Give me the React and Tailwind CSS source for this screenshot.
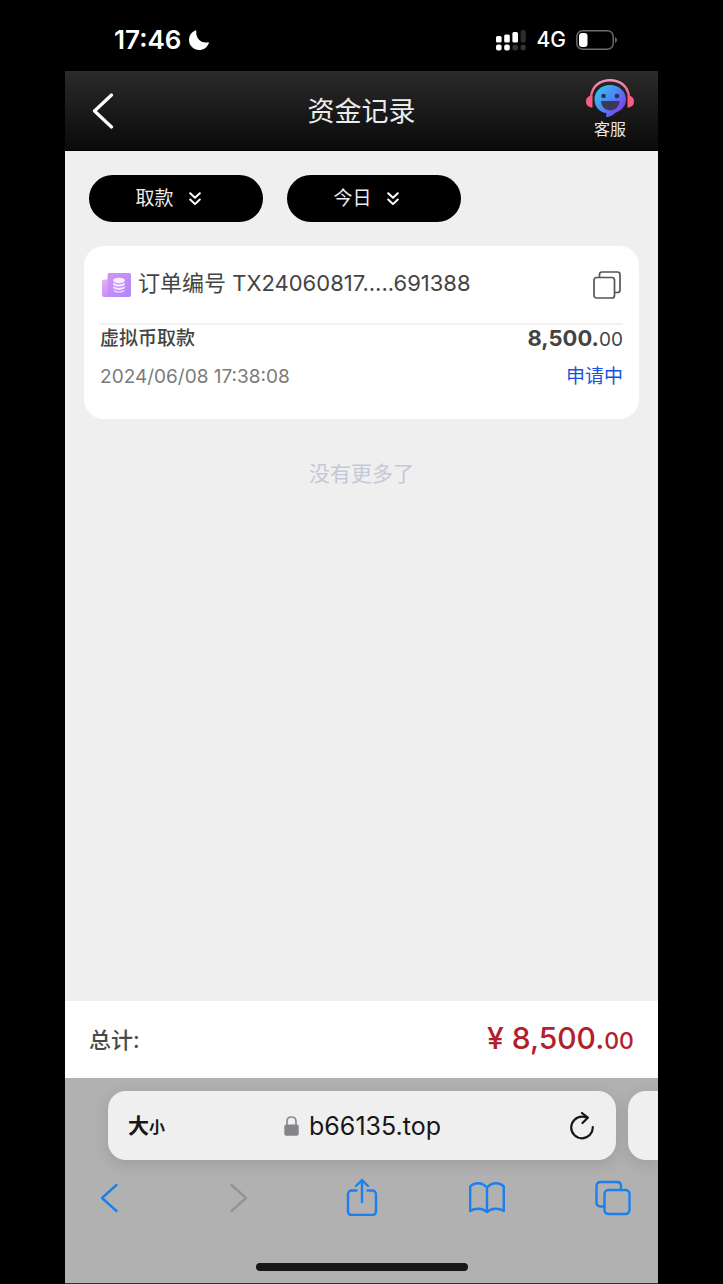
import React from "react";

function StatusBar() {
  return (
    <div className="flex h-[71px] items-center justify-between bg-black pb-[7px]">
      <div className="mt-4 flex items-center gap-2 pl-[49px] text-white">
        <time className="text-[26px] leading-7 font-semibold">17:46</time>
        <svg className="h-5 w-5" viewBox="0 0 20 20" fill="currentColor" aria-label="专注模式">
          <path d="M6.300.4Q7.400.1 7.300 1.200C6.500 7.500 11.500 13.800 19 12.300Q20.300 12 19.800 13.200C18.300 17.300 14.600 20 10.200 20 4.500 20 0 15.600 0 10 0 5.600 2.500 1.900 6.300.4Z" />
        </svg>
      </div>
      <div className="mt-4 flex items-center gap-[10px] pr-10 text-white">
        <svg className="h-[22px] w-[30px]" viewBox="0 0 30 22" fill="#fff" aria-label="信号">
          <rect x="0" y="7" width="5.600" height="6.500" rx="1.500" />
          <rect x="8.200" y="5.500" width="5.600" height="8" rx="1.500" />
          <rect x="16.400" y="3" width="5.600" height="10.500" rx="1.500" />
          <rect x="24.600" y="1" width="5.200" height="12.500" rx="1.500" fill="#2c2c2c" />
          <rect x="0" y="15.600" width="5.600" height="6" rx="2" />
          <rect x="8.200" y="15.600" width="5.600" height="6" rx="2" />
          <rect x="16.400" y="15.600" width="5.600" height="6" rx="2.500" fill="#333" />
          <rect x="24.600" y="15.600" width="5.200" height="6" rx="2.500" fill="#333" />
        </svg>
        <span className="text-[21px] leading-7 font-medium">4G</span>
        <svg className="h-5 w-[42px]" viewBox="0 0 42 20" aria-label="电量">
          <rect x=".8" y=".8" width="36.400" height="18.400" rx="5.500" fill="none" stroke="#6b6b6b" strokeWidth="1.500" />
          <rect x="3" y="3" width="8.500" height="14" rx="3" fill="#fff" />
          <path d="M39 7v6q2-.8 2-3t-2-3Z" fill="#6b6b6b" />
        </svg>
      </div>
    </div>
  );
}

function ServiceIcon() {
  return (
    <svg className="h-[38px] w-12" viewBox="0 0 48 38" aria-hidden="true">
      <defs>
        <linearGradient id="bubble" x1="0" y1="0.1" x2="1" y2="0.9">
          <stop offset="0" stopColor="#35c6ec" />
          <stop offset=".5" stopColor="#4e84f4" />
          <stop offset="1" stopColor="#9423f2" />
        </linearGradient>
        <linearGradient id="band" x1="0" y1="0" x2="0" y2="1">
          <stop offset="0" stopColor="#f194b6" />
          <stop offset="1" stopColor="#f5537f" />
        </linearGradient>
      </defs>
      <path d="M5 18C6 7 14 1.300 24 1.300S42 7 43 18" fill="none" stroke="url(#band)" strokeWidth="2.400" />
      <path d="M6.500 16.500v12C2.500 28.500 0 26 0 22.500s2.500-6 6.500-6Z" fill="#f95d83" />
      <path d="M41.500 16.500v12c4 0 6.500-2.500 6.500-6s-2.500-6-6.500-6Z" fill="#f95d83" />
      <path d="M24 6C14.500 6 8.500 13 8.500 20.500S14 33.500 20.500 34.200L20 38c4 0 7-1.500 9.500-4.200C36 31.500 40 26.500 40 20.500 40 13 33.500 6 24 6Z" fill="url(#bubble)" />
      <circle cx="17.600" cy="17" r="2.300" fill="#24374f" />
      <circle cx="31" cy="17" r="2.300" fill="#302f5b" />
      <path d="M15 22h18.500c-.5 6-4 9.300-9.200 9.300S15.500 28 15 22Z" fill="#3b3a55" />
    </svg>
  );
}

function Header() {
  return (
    <header className="grid h-20 grid-cols-3 items-center border-b border-black bg-linear-to-b from-[#2b2b2b] to-[#0a0a0a] text-white">
      <button type="button" aria-label="返回" className="ml-[27px] w-6">
        <svg className="h-9 w-6" viewBox="0 0 24 36" fill="none" stroke="#fff" strokeWidth="3.200" strokeLinecap="round" strokeLinejoin="round">
          <path d="M19.500 2 2.500 18l17 16" />
        </svg>
      </button>
      <h1 className="pt-0.5 text-center text-[27px] leading-9 font-normal text-[#ececec]">资金记录</h1>
      <button type="button" className="mr-6 flex flex-col items-center justify-self-end pb-0.5">
        <ServiceIcon />
        <span className="text-base leading-6 text-[#e8e8e8]">客服</span>
      </button>
    </header>
  );
}

function FilterButton({ children }) {
  return (
    <button type="button" className="flex h-[47px] w-[174px] items-center justify-center gap-[15px] rounded-full bg-black pr-4 text-[19px] leading-6 text-[#ececec]">
      {children}
      <svg className="h-[14px] w-3" viewBox="0 0 12 14" fill="none" stroke="#fff" strokeWidth="2" strokeLinecap="round" strokeLinejoin="round" aria-hidden="true">
        <path d="m1.200 1.200 4.800 4.600 4.800-4.600M1.200 7.500 6 12.100l4.800-4.600" />
      </svg>
    </button>
  );
}

function OrderIcon() {
  return (
    <svg className="h-6 w-[29px] shrink-0" viewBox="0 0 29 24" aria-hidden="true">
      <defs>
        <linearGradient id="order" x1="0" y1="0" x2="1" y2="1">
          <stop offset="0" stopColor="#d594f5" />
          <stop offset="1" stopColor="#ad87fb" />
        </linearGradient>
        <linearGradient id="fold" x1="0" y1="0" x2="0" y2="1">
          <stop offset="0" stopColor="#e3aef8" />
          <stop offset="1" stopColor="#cc8ef6" />
        </linearGradient>
      </defs>
      <path d="M6 6.500H2Q0 6.500 0 8.500V22q0 2 2 2h6Z" fill="url(#fold)" />
      <path d="M7.500 0H27q2 0 2 2v20q0 2-2 2H4q1.500-.5 1.500-2V2q0-2 2-2Z" fill="url(#order)" />
      <ellipse cx="17" cy="7.500" rx="5.800" ry="2.700" fill="#fdeefe" />
      <path d="M11.200 9.700q5.800 3.400 11.600 0v2.200q-5.800 3.600-11.600 0ZM11.200 13.300q5.800 3.400 11.600 0v2q-5.800 3.600-11.600 0ZM11.200 16.700q5.800 3.400 11.600 0-.4 2.800-5.800 2.800t-5.800-2.800Z" fill="#f8e5fe" />
    </svg>
  );
}

function OrderCard() {
  return (
    <article className="mx-[19px] mt-6 rounded-[20px] bg-white px-4 pb-7 text-[#444]">
      <div className="flex h-[79px] items-center justify-between border-b-2 border-[#f2f2f2] pr-0.5">
        <div className="flex items-center gap-[7px] pl-0.5">
          <OrderIcon />
          <h2 className="pb-1 text-[22px] leading-8 font-normal">订单编号 TX24060817.....691388</h2>
        </div>
        <button type="button" aria-label="复制">
          <svg className="h-7 w-7" viewBox="0 0 28 28" fill="none" stroke="#555" strokeWidth="1.700">
            <rect x="1" y="6.500" width="20.500" height="20.500" rx="2.500" />
            <path d="M6.500 6.500V3.500Q6.500 1 9 1h15.500Q27 1 27 3.500V19q0 2.500-2.500 2.500h-3" />
          </svg>
        </button>
      </div>
      <div className="flex h-7 items-center justify-between leading-7">
        <h3 className="text-[19px] font-medium">虚拟币取款</h3>
        <p className="text-[22px]"><b className="font-bold">8,500.</b><span className="text-[19px]">00</span></p>
      </div>
      <div className="mt-[10px] flex h-7 items-center justify-between text-[19px] leading-7">
        <time className="text-[#7b7b7b]">2024/06/08 17:38:08</time>
        <span className="text-[#1753e0]">申请中</span>
      </div>
    </article>
  );
}

function Tool({ label, disabled, children }) {
  return (
    <button type="button" aria-label={label} disabled={disabled}>
      <svg className="h-10 w-9" viewBox="0 0 36 40" fill="none" stroke={disabled ? "#949494" : "#1b80ee"} strokeWidth="2.400" strokeLinecap="round" strokeLinejoin="round">
        {children}
      </svg>
    </button>
  );
}

function BrowserBar() {
  return (
    <div className="border-b border-[#30303a] bg-[#b1b1b1]">
      <div className="flex gap-3 overflow-hidden pt-[13px] pb-4 pl-[43px]">
        <div className="flex h-[69px] flex-1 items-center justify-between rounded-[18px] bg-[#efefef] pr-[22px] pl-5 text-[#171717] shadow-[0_4px_16px_rgba(0,0,0,0.12)]">
          <button type="button" className="flex items-baseline text-[21px] leading-8 font-bold" aria-label="文字大小">
            大<span className="text-base">小</span>
          </button>
          <div className="flex items-center gap-[10px] pr-[10px]">
            <svg className="h-5 w-[15px]" viewBox="0 0 15 20" aria-label="安全连接">
              <path d="M3 10V5.500C3 2.800 4.800 1 7.500 1S12 2.800 12 5.500V10" fill="none" stroke="#8b8b90" strokeWidth="1.700" />
              <rect x=".3" y="8.500" width="14.400" height="11.300" rx="2" fill="#858589" />
            </svg>
            <span className="text-[25px] leading-8">b66135.top</span>
          </div>
          <button type="button" aria-label="刷新">
            <svg className="h-7 w-6" viewBox="0 0 24 28" fill="none" stroke="#171717" strokeWidth="2.200" strokeLinecap="round" strokeLinejoin="round">
              <path d="M22.800 15A10.800 10.800 0 1 1 12 4.700q3 0 5.200.8" />
              <path d="m12 1 5.800 4.700-5.300 5.300" />
            </svg>
          </button>
        </div>
        <div className="h-[69px] w-[30px] rounded-l-[18px] bg-[#efefef] shadow-[0_4px_16px_rgba(0,0,0,0.12)]" />
      </div>
      <nav aria-label="浏览器" className="flex justify-between px-[27px]">
        <Tool label="后退"><path d="M24.500 9 10 22l14.500 13" /></Tool>
        <Tool label="前进" disabled><path d="M13.500 9 28 22 13.500 35" /></Tool>
        <Tool label="分享">
          <path d="M12.500 14.500H8q-4 0-4 4V35q0 4 4 4h20q4 0 4-4V18.500q0-4-4-4h-4.500M18 26V4M12 10l6-6 6 6" />
        </Tool>
        <Tool label="书签">
          <path d="M18 11.500C13 5.800 5 6.200 1.200 10.500V35c5-3.200 12-3.200 16.800 1 4.800-4.200 11.800-4.200 16.800-1V10.500C31 6.200 23 5.800 18 11.500ZM18 11.500V36" />
        </Tool>
        <Tool label="标签页">
          <rect x="9.500" y="14" width="25" height="24" rx="4" />
          <path d="M9.500 30.500H5.500q-4 0-4-4V10q0-4 4-4h16.500q4 0 4 4v4" />
        </Tool>
      </nav>
      <div className="flex justify-center pt-[47px] pb-3">
        <div className="h-2 w-[212px] rounded-full bg-[#171717]" />
      </div>
    </div>
  );
}

export default function App() {
  return (
    <div className="min-h-screen bg-black px-[9%] font-[Inter,'Noto_Sans_CJK_SC',sans-serif]">
      <div className="flex min-h-screen flex-col bg-[#efefef]">
        <StatusBar />
        <Header />
        <main className="flex-1">
          <div className="flex gap-6 px-6 pt-6">
            <FilterButton>取款</FilterButton>
            <FilterButton>今日</FilterButton>
          </div>
          <OrderCard />
          <p className="mt-[39px] text-center text-[21px] leading-8 text-[#c5c8d6]">没有更多了</p>
        </main>
        <footer className="flex h-[77px] items-center justify-between bg-white px-6">
          <span className="text-[22px] leading-8 font-medium text-[#4a4a4a]">总计:</span>
          <strong className="text-[30px] leading-9 font-medium text-[#b2202c]">¥ 8,500.<span className="text-[23px]">00</span></strong>
        </footer>
        <BrowserBar />
      </div>
    </div>
  );
}
